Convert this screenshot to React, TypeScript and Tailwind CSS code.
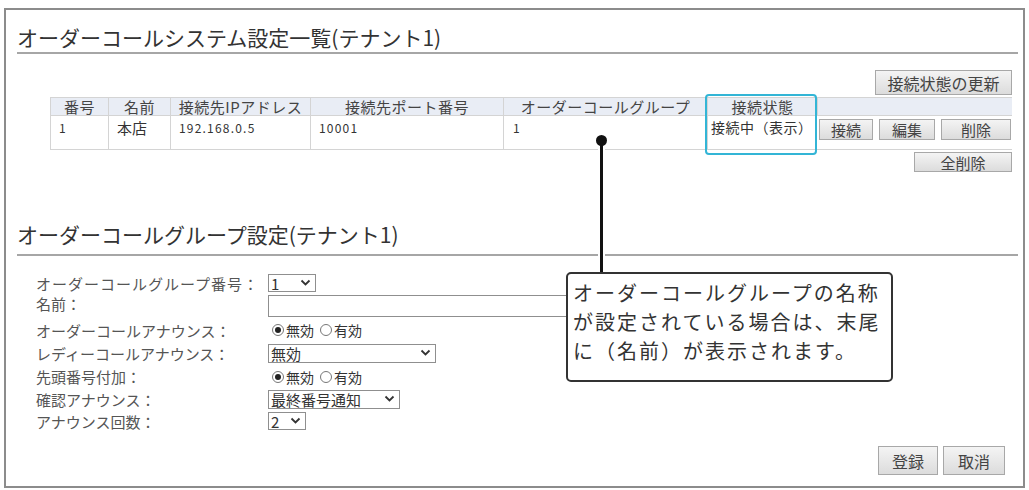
import React from "react";

const FONT = { fontFamily: '"Noto Sans CJK JP", "Noto Sans", sans-serif' };

function Btn({ children, className = "" }: { children: React.ReactNode; className?: string }) {
  return (
    <div
      className={
        "flex items-center justify-center border border-[#a8a8a8] bg-gradient-to-b from-[#f4f4f4] to-[#dcdcdc] text-[#444] leading-none " +
        className
      }
    >
      {children}
    </div>
  );
}

function Chevron() {
  return (
    <svg width="11" height="8" viewBox="0 0 11 8" className="shrink-0">
      <polyline points="1.5,1.5 5.5,5.5 9.5,1.5" fill="none" stroke="#333" strokeWidth="1.8" />
    </svg>
  );
}

function Sel({ label, className = "" }: { label: string; className?: string }) {
  return (
    <div
      className={
        "flex items-center justify-between border border-[#8f8f8f] bg-white pl-[2px] pr-[4px] text-[15px] leading-none text-[#333] " +
        className
      }
    >
      <span>{label}</span>
      <Chevron />
    </div>
  );
}

function Radio({ on }: { on: boolean }) {
  return (
    <span className="flex h-[12px] w-[12px] items-center justify-center rounded-full border border-[#777] bg-white">
      {on && <span className="h-[6px] w-[6px] rounded-full bg-[#222]" />}
    </span>
  );
}

function Radios() {
  return (
    <div className="flex items-center gap-[2px] pl-[4px] text-[14px] text-[#333]">
      <Radio on />
      <span>無効</span>
      <span className="w-[2px]" />
      <Radio on={false} />
      <span>有効</span>
    </div>
  );
}

const cols = [58, 62, 140, 193, 204, 110, 195];

export default function App() {
  const headers = ["番号", "名前", "接続先IPアドレス", "接続先ポート番号", "オーダーコールグループ", "接続状態", ""];
  return (
    <div className="h-[490px] w-[1029px] bg-white pl-[4px] pt-[8px]" style={FONT}>
      <div className="relative h-[480px] w-[1021px] border-2 border-[#8c8c8c]">
        {/* Title 1 */}
        <div className="ml-[11px] mr-[5px] flex h-[44px] items-end border-b-2 border-[#a6a6a6] pb-[2px]">
          <span className="text-[21px] leading-[26px] text-[#333]">オーダーコールシステム設定一覧(テナント1)</span>
        </div>

        {/* update */}
        <div className="mt-[16px] flex justify-end pr-[11px]">
          <Btn className="h-[25px] w-[137px] text-[16px]">接続状態の更新</Btn>
        </div>

        {/* table */}
        <div className="relative ml-[44px] mt-[2px] w-[962px]">
          <div className="flex h-[19px] border-y border-[#d4d4d4] bg-[#e9edf5] text-[15px] leading-none tracking-[0.5px] text-[#444]">
            {headers.map((h, i) => (
              <div
                key={i}
                style={{ width: cols[i] }}
                className="flex items-center justify-center border-l border-[#d4d4d4]"
              >
                {h}
              </div>
            ))}
          </div>
          <div className="flex h-[34px] border-b border-[#d4d4d4] text-[12px] text-[#333]">
            <div style={{ width: cols[0] }} className="border-l border-[#d4d4d4] pl-[8px] pt-[3px]">1</div>
            <div style={{ width: cols[1] }} className="border-l border-[#d4d4d4] pl-[8px] pt-[1px] text-[15px]">本店</div>
            <div style={{ width: cols[2] }} className="border-l border-[#d4d4d4] pl-[8px] pt-[3px] tracking-[1.2px]">192.168.0.5</div>
            <div style={{ width: cols[3] }} className="border-l border-[#d4d4d4] pl-[8px] pt-[3px] tracking-[1.2px]">10001</div>
            <div style={{ width: cols[4] }} className="border-l border-[#d4d4d4] pl-[9px] pt-[3px]">1</div>
            <div style={{ width: cols[5] }} className="border-l border-[#d4d4d4] pl-[3px] pt-[1px] text-[14px] tracking-[0.5px]">接続中（表示）</div>
            <div style={{ width: cols[6] }} className="flex gap-[6px] pl-[2px] pt-[3px]">
              <Btn className="h-[21px] w-[54px] text-[15px]">接続</Btn>
              <Btn className="h-[21px] w-[56px] text-[15px]">編集</Btn>
              <Btn className="h-[21px] w-[70px] text-[15px]">削除</Btn>
            </div>
          </div>
          {/* highlight box */}
          <div className="pointer-events-none absolute left-[655px] top-[-3px] h-[61px] w-[112px] rounded-[4px] border-2 border-[#33b5d6]" />
        </div>

        <div className="mt-[2px] flex justify-end pr-[11px]">
          <Btn className="h-[20px] w-[98px] text-[15px]">全削除</Btn>
        </div>

        {/* Title 2 */}
        <div className="ml-[11px] mr-[5px] mt-[40px] flex h-[44px] items-end border-b-2 border-[#a6a6a6] pb-[7px]">
          <span className="text-[21px] leading-[26px] text-[#333]">オーダーコールグループ設定(テナント1)</span>
        </div>

        {/* Form */}
        <div className="ml-[30px] mt-[17px] grid grid-cols-[232px_1fr] text-[15px] leading-none text-[#555]">
          <div className="flex h-[20px] items-center tracking-[1px]">オーダーコールグループ番号：</div>
          <div className="flex h-[20px] items-center">
            <Sel label="1" className="h-[18px] w-[48px]" />
          </div>

          <div className="flex h-[26px] items-start pt-[3px]">名前：</div>
          <div className="flex h-[26px] items-center">
            <div className="h-[22px] w-[400px] border border-[#8f8f8f] bg-white" />
          </div>

          <div className="flex h-[22px] items-center">オーダーコールアナウンス：</div>
          <div className="flex h-[22px] items-center">
            <Radios />
          </div>

          <div className="flex h-[24px] items-center">レディーコールアナウンス：</div>
          <div className="flex h-[24px] items-center">
            <Sel label="無効" className="h-[19px] w-[168px]" />
          </div>

          <div className="flex h-[23px] items-center">先頭番号付加：</div>
          <div className="flex h-[23px] items-center">
            <Radios />
          </div>

          <div className="flex h-[22px] items-center">確認アナウンス：</div>
          <div className="flex h-[22px] items-center">
            <Sel label="最終番号通知" className="h-[19px] w-[132px]" />
          </div>

          <div className="flex h-[22px] items-center">アナウンス回数：</div>
          <div className="flex h-[22px] items-center">
            <Sel label="2" className="h-[18px] w-[38px]" />
          </div>
        </div>

        <div className="absolute bottom-[11px] right-[18px] flex gap-[5px]">
          <Btn className="h-[29px] w-[60px] text-[16px]">登録</Btn>
          <Btn className="h-[29px] w-[62px] text-[16px]">取消</Btn>
        </div>

        {/* callout connector */}
        <div className="absolute left-[591px] top-[127px] flex h-[136px] w-[9px] justify-center">
          <div className="h-full w-[7px] bg-white">
            <div className="mx-auto h-full w-[3px] bg-[#111]" />
          </div>
        </div>
        <div className="absolute left-[590px] top-[125px] h-[11px] w-[11px] rounded-full bg-[#111]" />

        {/* callout */}
        <div className="absolute left-[560px] top-[262px] flex h-[110px] w-[327px] flex-col rounded-[5px] border-2 border-[#333] bg-white pl-[5px] pt-[4px] text-[20px] leading-[29px] tracking-[2px] text-[#333]">
          <div>オーダーコールグループの名称</div>
          <div>が設定されている場合は、末尾</div>
          <div>に（名前）が表示されます。</div>
        </div>
      </div>
    </div>
  );
}
